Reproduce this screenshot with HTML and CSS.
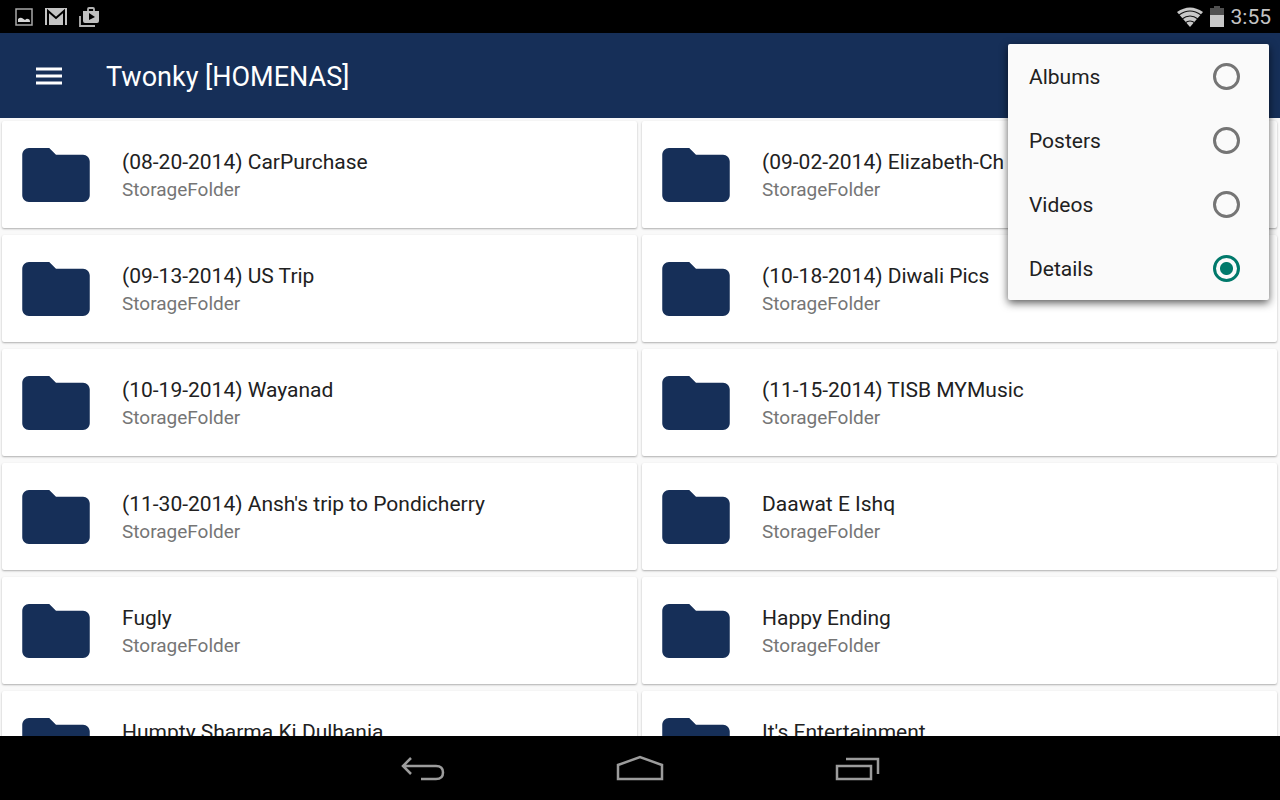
FILE: index.html
```html
<!doctype html>
<html lang="en">
  <head>
    <meta charset="UTF-8" />
    <meta name="viewport" content="width=device-width, initial-scale=1.0" />
    <title>Twonky [HOMENAS]</title>
    <link rel="stylesheet" href="styles.css">
  </head>
  <body>
    <svg class="sprite" aria-hidden="true">
      <symbol id="folder" viewBox="0 0 20 16">
        <path d="M8 0H2C.9 0 0 .9 0 2v12c0 1.100.9 2 2 2h16c1.100 0 2-.9 2-2V4c0-1.100-.9-2-2-2h-8z" />
      </symbol>
    </svg>

    <div class="status-bar">
      <div class="notifications">
        <svg width="18" height="18" viewBox="0 0 18 18">
          <path d="M1 1h16v16H1z" fill="none" stroke="#a8a8a8" stroke-width="1.5" />
          <path d="M3 14v-3q2-2 4-1l3 2q2-2 3-1 2 0 2 3z" fill="#d6d6d6" />
        </svg>
        <svg width="22" height="17" viewBox="0 0 22 17">
          <path d="M0 0h22v17H0z" fill="#c4c4c4" />
          <path d="M3 17V3l8 7 8-7v14" fill="none" stroke="#000" stroke-width="2" />
        </svg>
        <svg width="22" height="20" viewBox="0 0 22 20">
          <path d="M1 9v10h15" fill="none" stroke="#b4b4b4" stroke-width="1.8" />
          <path d="M9 4V2q0-1 1-1h4q1 0 1 1v2" fill="none" stroke="#b4b4b4" stroke-width="1.8" />
          <path d="M4 4h16v10q0 2-2 2H6q-2 0-2-2zM10 6v7l6-3z" fill="#c0c0c0" fill-rule="evenodd" />
        </svg>
      </div>
      <div class="system">
        <svg width="26" height="20" viewBox="0 0 26 20">
          <path d="M0 5Q13-4 26 5L13 20z" fill="#c8c8c8" />
          <path d="M2 8q11-8 22 0M5 12q8-6 16 0M8 16q5-4 10 0" fill="none" stroke="#111" stroke-width="1.2" />
        </svg>
        <svg width="14" height="21" viewBox="0 0 14 21">
          <path d="M4 0h6v2h4v7H0V2h4z" fill="#505050" />
          <path d="M0 9h14v12H0z" fill="#c8c8c8" />
        </svg>
        <span class="clock">3:55</span>
      </div>
    </div>

    <header class="app-bar">
      <button class="menu-btn" aria-label="Open menu">
        <svg width="26" height="18" viewBox="0 0 26 18">
          <path d="M0 2h26M0 9h26M0 16h26" stroke="#fff" stroke-width="2.800" />
        </svg>
      </button>
      <h1>Twonky [HOMENAS]</h1>

      <form class="popup">
        <label><span>Albums</span> <input type="radio" name="view" value="albums" /></label>
        <label><span>Posters</span> <input type="radio" name="view" value="posters" /></label>
        <label><span>Videos</span> <input type="radio" name="view" value="videos" /></label>
        <label><span>Details</span> <input type="radio" name="view" value="details" checked /></label>
      </form>
    </header>

    <main class="content">
      <div class="grid">
        <a class="card" href="#">
          <svg class="folder"><use href="#folder" /></svg>
          <div class="text"><h2>(08-20-2014) CarPurchase</h2><p>StorageFolder</p></div>
        </a>
        <a class="card" href="#">
          <svg class="folder"><use href="#folder" /></svg>
          <div class="text"><h2>(09-02-2014) Elizabeth-Ch</h2><p>StorageFolder</p></div>
        </a>
        <a class="card" href="#">
          <svg class="folder"><use href="#folder" /></svg>
          <div class="text"><h2>(09-13-2014) US Trip</h2><p>StorageFolder</p></div>
        </a>
        <a class="card" href="#">
          <svg class="folder"><use href="#folder" /></svg>
          <div class="text"><h2>(10-18-2014) Diwali Pics</h2><p>StorageFolder</p></div>
        </a>
        <a class="card" href="#">
          <svg class="folder"><use href="#folder" /></svg>
          <div class="text"><h2>(10-19-2014) Wayanad</h2><p>StorageFolder</p></div>
        </a>
        <a class="card" href="#">
          <svg class="folder"><use href="#folder" /></svg>
          <div class="text"><h2>(11-15-2014) TISB MYMusic</h2><p>StorageFolder</p></div>
        </a>
        <a class="card" href="#">
          <svg class="folder"><use href="#folder" /></svg>
          <div class="text"><h2>(11-30-2014) Ansh's trip to Pondicherry</h2><p>StorageFolder</p></div>
        </a>
        <a class="card" href="#">
          <svg class="folder"><use href="#folder" /></svg>
          <div class="text"><h2>Daawat E Ishq</h2><p>StorageFolder</p></div>
        </a>
        <a class="card" href="#">
          <svg class="folder"><use href="#folder" /></svg>
          <div class="text"><h2>Fugly</h2><p>StorageFolder</p></div>
        </a>
        <a class="card" href="#">
          <svg class="folder"><use href="#folder" /></svg>
          <div class="text"><h2>Happy Ending</h2><p>StorageFolder</p></div>
        </a>
        <a class="card" href="#">
          <svg class="folder"><use href="#folder" /></svg>
          <div class="text"><h2>Humpty Sharma Ki Dulhania</h2><p>StorageFolder</p></div>
        </a>
        <a class="card" href="#">
          <svg class="folder"><use href="#folder" /></svg>
          <div class="text"><h2>It's Entertainment</h2><p>StorageFolder</p></div>
        </a>
      </div>
    </main>

    <nav class="nav-bar">
      <button aria-label="Back">
        <svg width="48" height="28" viewBox="0 0 48 28">
          <path d="M12 3L4 11l8 8M4 11h33q7 0 7 6.500t-7 6.500H22" />
        </svg>
      </button>
      <button aria-label="Home">
        <svg width="48" height="28" viewBox="0 0 48 28">
          <path d="M2 24V10L24 2l22 8v14z" />
        </svg>
      </button>
      <button aria-label="Recent apps">
        <svg width="48" height="28" viewBox="0 0 48 28">
          <path d="M4 11h34v13H4zM13 4h32v15" />
        </svg>
      </button>
    </nav>
  </body>
</html>
```

FILE: styles.css
```css
* {
  margin: 0;
  padding: 0;
  box-sizing: border-box;
}

body {
  font-family: Roboto, "Liberation Sans", sans-serif;
  background: #000;
  color: #212121;
  height: 100vh;
  display: flex;
  flex-direction: column;
  overflow: hidden;
}

button {
  background: none;
  border: none;
  cursor: pointer;
}

svg {
  display: block;
}

.sprite {
  display: none;
}

/* status bar */
.status-bar {
  height: 33px;
  flex-shrink: 0;
  padding: 0 9px 0 15px;
  display: flex;
  align-items: center;
  justify-content: space-between;
}

.notifications {
  display: flex;
  align-items: center;
  gap: 12px;
}

.system {
  display: flex;
  align-items: center;
  gap: 7px;
}

.clock {
  color: #c4c4c4;
  font-size: 21px;
  line-height: 33px;
  padding-top: 2px;
}

/* app bar */
.app-bar {
  position: relative;
  height: 85px;
  flex-shrink: 0;
  padding-left: 36px;
  display: flex;
  align-items: center;
  gap: 44px;
  background: #162f58;
  color: #fff;
}

.app-bar h1 {
  padding-top: 2px;
  font-size: 27px;
  font-weight: 400;
}

.popup {
  position: absolute;
  z-index: 1;
  top: 11px;
  right: 11px;
  width: 261px;
  background: #fafafa;
  border-radius: 2px;
  box-shadow: 0 3px 8px rgba(0, 0, 0, 0.65);
}

.popup label {
  height: 64px;
  padding: 0 29px 0 21px;
  display: flex;
  align-items: center;
  justify-content: space-between;
  color: #212121;
  font-size: 21px;
}

.popup span {
  padding-top: 2px;
}

.popup input {
  appearance: none;
  width: 27px;
  height: 27px;
  border: 3px solid #757575;
  border-radius: 50%;
}

.popup input:checked {
  border-color: #00796b;
  background: radial-gradient(circle, #00796b 6px, transparent 7px);
}

/* folders */
.content {
  flex: 1;
  min-height: 0;
  overflow: hidden;
  background: #f9f9f9;
}

.grid {
  display: grid;
  grid-template-columns: 1fr 1fr;
  gap: 7px 5px;
  padding: 3px 3px 3px 2px;
}

.card {
  height: 107px;
  padding: 0 20px;
  display: flex;
  align-items: center;
  gap: 32px;
  background: #fff;
  border-radius: 2px;
  box-shadow: 0 1px 2px rgba(0, 0, 0, 0.3);
  color: #212121;
  text-decoration: none;
}

.folder {
  width: 68px;
  height: 54px;
  flex-shrink: 0;
  fill: #162f58;
}

.text {
  padding-top: 2px;
}

.text h2 {
  font-size: 21px;
  font-weight: 400;
  line-height: 28px;
}

.text p {
  color: #757575;
  font-size: 19px;
  line-height: 28px;
}

/* navigation bar */
.nav-bar {
  height: 64px;
  flex-shrink: 0;
  padding-top: 2px;
  display: flex;
  align-items: center;
  justify-content: center;
  gap: 169px;
}

.nav-bar path {
  fill: none;
  stroke: #9c9c9c;
  stroke-width: 2.5;
}
```
